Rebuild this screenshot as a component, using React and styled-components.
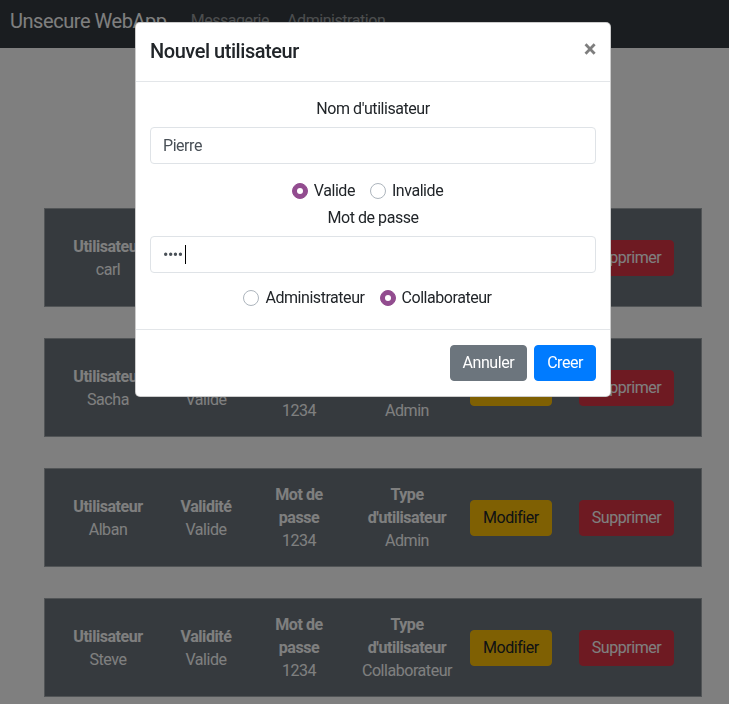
import styled, { createGlobalStyle } from 'styled-components';

const GlobalStyle = createGlobalStyle`
  * {
    box-sizing: border-box;
  }
  body {
    margin: 0;
    background: #ffffff;
    font-family: Roboto, "Liberation Sans", Arial, sans-serif;
    letter-spacing: -0.45px;
    color: #212529;
  }
`;

const users = [
  { name: 'carl', valid: 'Valide', password: '1234', type: 'Admin' },
  { name: 'Sacha', valid: 'Valide', password: '1234', type: 'Admin' },
  { name: 'Alban', valid: 'Valide', password: '1234', type: 'Admin' },
  { name: 'Steve', valid: 'Valide', password: '1234', type: 'Collaborateur' },
];

export default function App() {
  return (
    <>
      <GlobalStyle />
      <Navbar>
        <Brand>Unsecure WebApp</Brand>
        <NavLink>Messagerie</NavLink>
        <NavLink>Administration</NavLink>
      </Navbar>
      <Main>
        {users.map((u) => (
          <UserCard key={u.name}>
            <Col $w={100}>
              <Label>Utilisateur</Label>
              <Value>{u.name}</Value>
            </Col>
            <Col $w={96}>
              <Label>Validité</Label>
              <Value>{u.valid}</Value>
            </Col>
            <Col $w={90}>
              <Label>
                Mot de
                <br />
                passe
              </Label>
              <Value>{u.password}</Value>
            </Col>
            <Col $w={126}>
              <Label>
                Type
                <br />
                d'utilisateur
              </Label>
              <Value>{u.type}</Value>
            </Col>
            <Button $bg="#ffc107" $color="#212529">Modifier</Button>
            <Button $bg="#dc3545" $color="#ffffff" $ml={27}>
              Supprimer
            </Button>
          </UserCard>
        ))}
      </Main>

      <Backdrop />
      <Dialog>
        <DialogHeader>
          <DialogTitle>Nouvel utilisateur</DialogTitle>
          <Close>×</Close>
        </DialogHeader>
        <DialogBody>
          <FieldLabel>Nom d'utilisateur</FieldLabel>
          <Field>Pierre</Field>
          <RadioRow $mt={15}>
            <RadioItem>
              <Radio $checked />
              Valide
            </RadioItem>
            <RadioItem>
              <Radio />
              Invalide
            </RadioItem>
          </RadioRow>
          <FieldLabel $mt={3}>Mot de passe</FieldLabel>
          <Field>
            <Dots>••••</Dots>
            <Caret />
          </Field>
          <RadioRow $mt={13}>
            <RadioItem>
              <Radio />
              Administrateur
            </RadioItem>
            <RadioItem>
              <Radio $checked />
              Collaborateur
            </RadioItem>
          </RadioRow>
        </DialogBody>
        <DialogFooter>
          <Button $bg="#6c757d" $color="#ffffff">Annuler</Button>
          <Button $bg="#007bff" $color="#ffffff" $ml={7}>
            Creer
          </Button>
        </DialogFooter>
      </Dialog>
    </>
  );
}

const Navbar = styled.nav`
  height: 48px;
  background: #343a40;
  display: flex;
  align-items: center;
  padding: 0 10px 6px;
`;

const Brand = styled.span`
  font-size: 20px;
  line-height: 24px;
  color: #ffffff;
  margin-right: 16px;
`;

const NavLink = styled.span`
  font-size: 16px;
  line-height: 24px;
  color: rgba(255, 255, 255, 0.5);
  padding: 0 10px 0 8px;
`;

const Main = styled.main`
  padding: 160px 0 40px 44px;
  display: flex;
  flex-direction: column;
  gap: 31px;
`;

const UserCard = styled.div`
  width: 658px;
  height: 99px;
  background: #6c757d;
  border: 1px solid #a3a8ad;
  display: flex;
  align-items: center;
  padding-left: 13px;
  color: #ffffff;
`;

const Col = styled.div`
  width: ${(p) => p.$w}px;
  flex-shrink: 0;
  text-align: center;
  font-size: 16px;
  line-height: 23px;
  white-space: nowrap;
`;

const Label = styled.div`
  font-weight: 700;
`;

const Value = styled.div`
  font-weight: 400;
`;

const Button = styled.button`
  flex-shrink: 0;
  height: 36px;
  padding: 0 12px;
  margin-left: ${(p) => p.$ml || 0}px;
  border: 1px solid ${(p) => p.$bg};
  border-radius: 4px;
  background: ${(p) => p.$bg};
  color: ${(p) => p.$color};
  font-family: Roboto, "Liberation Sans", Arial, sans-serif;
  font-size: 16px;
  letter-spacing: -0.45px;
  line-height: 24px;
`;

const Backdrop = styled.div`
  position: fixed;
  inset: 0;
  background: rgba(0, 0, 0, 0.5);
`;

const Dialog = styled.div`
  position: fixed;
  top: 22px;
  left: 135px;
  width: 476px;
  background: #ffffff;
  border: 1px solid rgba(0, 0, 0, 0.2);
  border-radius: 5px;
`;

const DialogHeader = styled.div`
  display: flex;
  justify-content: space-between;
  align-items: flex-start;
  padding: 16px 14px 18px 14px;
  border-bottom: 1px solid #e3e6e9;
`;

const DialogTitle = styled.h5`
  margin: 0;
  font-size: 20px;
  font-weight: 500;
  line-height: 24px;
  color: #212529;
`;

const Close = styled.span`
  font-size: 24px;
  font-weight: 700;
  line-height: 20px;
  color: #000000;
  opacity: 0.5;
`;

const DialogBody = styled.div`
  padding: 15px 14px 19px;
  display: flex;
  flex-direction: column;
`;

const FieldLabel = styled.label`
  display: block;
  text-align: center;
  font-size: 16px;
  line-height: 24px;
  color: #212529;
  margin-top: ${(p) => p.$mt || 0}px;
  margin-bottom: 6px;
`;

const Field = styled.div`
  height: 37px;
  border: 1px solid #dfe3e7;
  border-radius: 4px;
  padding: 0 12px;
  display: flex;
  align-items: center;
  font-size: 16px;
  color: #495057;
`;

const Dots = styled.span`
  font-size: 16px;
  color: #495057;
  letter-spacing: -0.5px;
`;

const Caret = styled.span`
  width: 1px;
  height: 19px;
  background: #000000;
  margin-left: 2px;
`;

const RadioRow = styled.div`
  display: flex;
  justify-content: center;
  gap: 15px;
  padding-right: 11px;
  margin-top: ${(p) => p.$mt || 0}px;
`;

const RadioItem = styled.label`
  display: flex;
  align-items: center;
  gap: 6px;
  font-size: 16px;
  line-height: 24px;
  color: #212529;
`;

const Radio = styled.span`
  width: 16px;
  height: 16px;
  border-radius: 50%;
  position: relative;
  background: ${(p) => (p.$checked ? '#924c8f' : '#ffffff')};
  border: 1px solid ${(p) => (p.$checked ? '#924c8f' : '#adb5bd')};
  &::after {
    content: '';
    display: ${(p) => (p.$checked ? 'block' : 'none')};
    position: absolute;
    left: 4px;
    top: 4px;
    width: 6px;
    height: 6px;
    border-radius: 50%;
    background: #ffffff;
  }
`;

const DialogFooter = styled.div`
  display: flex;
  justify-content: flex-end;
  padding: 15px 14px 15px;
  border-top: 1px solid #e3e6e9;
`;
